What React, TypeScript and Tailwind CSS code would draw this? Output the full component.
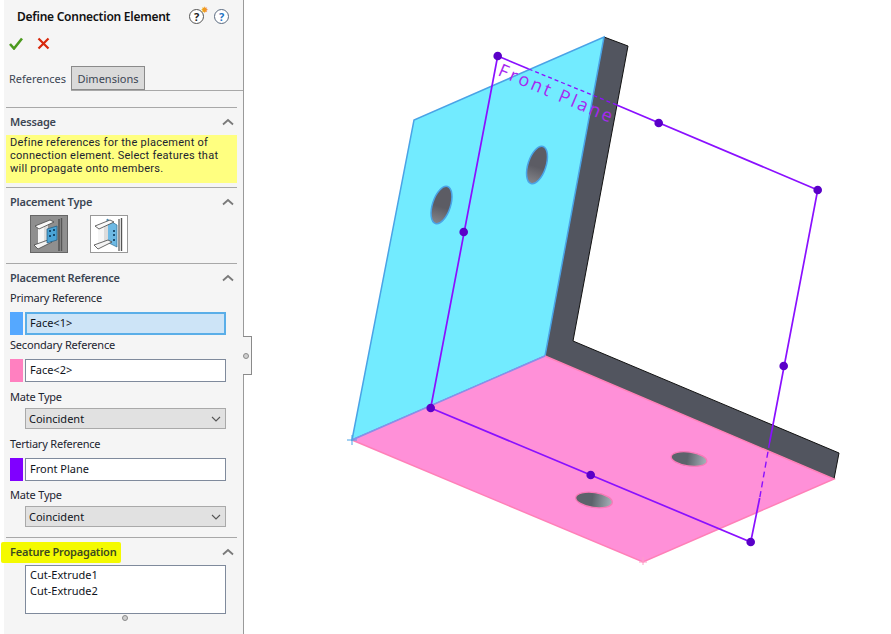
const font = "font-['Noto_Sans',sans-serif]";

const Chevron = () => (
  <svg width="12" height="8" viewBox="0 0 12 8" className="shrink-0">
    <path d="M1 6.5 L6 2 L11 6.5" fill="none" stroke="#7a7a7a" strokeWidth="1.8" />
  </svg>
);

const Section = ({ title, className = "", children }: { title: string; className?: string; children?: React.ReactNode }) => (
  <section className={`mx-[6px] border-t border-[#a8a8a8] ${className}`}>
    <div className="flex h-[26px] items-center justify-between pl-[4px] pr-[3px] pt-[2px]">
      <span className="text-[11px] font-semibold tracking-[-0.2px] text-[#3c4654]">{title}</span>
      <Chevron />
    </div>
    {children}
  </section>
);

const FieldLabel = ({ className = "", children }: { className?: string; children: React.ReactNode }) => (
  <div className={`flex h-[16px] items-center pl-[4px] text-[11px] tracking-[-0.2px] text-[#1c2430] ${className}`}>{children}</div>
);

const RefRow = ({ color, value, active, className = "" }: { color: string; value: string; active?: boolean; className?: string }) => (
  <div className={`flex h-[23px] gap-[2px] pl-[4px] ${className}`}>
    <div className={`w-[13px] ${color}`} />
    <div
      className={
        active
          ? "flex w-[201px] items-center border-2 border-[#5aaee8] bg-[#cde4f7] pl-[3px] text-[11px] text-[#10141c]"
          : "flex w-[201px] items-center border border-[#7f8a9c] bg-white pl-[4px] text-[11px] text-[#10141c]"
      }
    >
      {value}
    </div>
  </div>
);

const Select = ({ value, className = "" }: { value: string; className?: string }) => (
  <div className={`ml-[19px] flex h-[21px] w-[201px] items-center justify-between border border-[#a9a9a9] bg-[#e1e1e1] pl-[3px] pr-[4px] pt-[1px] text-[11px] text-[#10141c] ${className}`}>
    <span>{value}</span>
    <svg width="10" height="6" viewBox="0 0 10 6">
      <path d="M1 1 L5 5 L9 1" fill="none" stroke="#555" strokeWidth="1.1" />
    </svg>
  </div>
);

const BeamIcon = ({ outer }: { outer?: boolean }) => (
  <svg width="36" height="36" viewBox="1 1 36 36">
    <path d="M29 4 V36" stroke="#333" strokeWidth="1" />
    <path d="M31.5 3 V36" stroke="#555" strokeWidth="1.4" />
    {outer && <path d="M17 4 L27 10 V32 L17 27 Z" fill="#6db9e4" stroke="#2f6d92" strokeWidth="0.7" />}
    <path d="M8 13 L18 9 V26 L8 30 Z" fill="#f6f6f6" />
    <path d="M14 11 L18 9 V26 L14 28 Z" fill="#dcdcdc" />
    <path d="M5 11 L20 5 L24 7 L9 14 Z" fill="#fafafa" stroke="#444" strokeWidth="0.8" />
    <path d="M4 30 L18 25 L22 27 L8 34 Z" fill="#f4f4f4" stroke="#444" strokeWidth="0.8" />
    {outer ? (
      <g fill="#1d4f73">
        <rect x="23" y="15" width="2" height="2" />
        <rect x="23" y="19" width="2" height="2" />
        <rect x="23" y="24" width="2" height="2" />
      </g>
    ) : (
      <>
        <path d="M17 14 L27 11 V25 L17 28 Z" fill="#4aa3d6" stroke="#1e5a80" strokeWidth="0.7" />
        <g fill="#174a6e">
          <rect x="19" y="15" width="2" height="2" />
          <rect x="23" y="14" width="2" height="2" />
          <rect x="19" y="20" width="2" height="2" />
          <rect x="23" y="19" width="2" height="2" />
        </g>
      </>
    )}
  </svg>
);

const HelpIcon = ({ dark }: { dark?: boolean }) => (
  <div
    className={
      dark
        ? "flex h-[15px] w-[15px] items-center justify-center rounded-full border-[1.5px] border-[#555] bg-white text-[11px] font-bold leading-none text-[#222]"
        : "flex h-[15px] w-[15px] items-center justify-center rounded-full border-[1.5px] border-[#5a6a80] bg-white text-[11px] font-bold leading-none text-[#1f73c4]"
    }
  >
    ?
  </div>
);

const P = "#8a10ff";
const handles = [
  [497, 56],
  [658, 123],
  [817, 190],
  [783, 366],
  [750, 542],
  [590, 475],
  [430, 408],
  [463, 232],
];

const Model = () => (
  <svg width="647" height="634" viewBox="244 0 647 634" className="block">
    <defs>
      <linearGradient id="holeBlue" x1="0" y1="0" x2="0" y2="1">
        <stop offset="0.55" stopColor="#5c5c64" />
        <stop offset="1" stopColor="#85858a" />
      </linearGradient>
      <linearGradient id="holePink" x1="0" y1="0" x2="1" y2="0">
        <stop offset="0.45" stopColor="#5c636b" />
        <stop offset="1" stopColor="#a8b2ba" />
      </linearGradient>
    </defs>
    <path d="M604 37 L628 46 L573 341 L839 453 L834 479 L545 356 Z" fill="#52555f" />
    <path d="M604 37 L628 46 L573 341 L839 453 L834 479" fill="none" stroke="#111" strokeWidth="1" />
    <path d="M352 440 L414 120 L604 37 L545 356 Z" fill="#72ebff" stroke="#4aa3e6" strokeWidth="1.5" />
    <path d="M352 440 L545 356 L834 479 L643 562 Z" fill="#ff90d8" />
    <path d="M352 440 L643 562 L834 479 L545 356" fill="none" stroke="#ff80b8" strokeWidth="1.5" />
    <path d="M352 440 L545 356" stroke="#8c8ee8" strokeWidth="1.5" />
    <path d="M347 440 H357 M352 435 V445" stroke="#4aa3e6" strokeWidth="1" />
    <path d="M643 557 V565 M639 562 H647" stroke="#ff9cc8" strokeWidth="1" />

    {/* holes */}
    <ellipse cx="441.5" cy="205" rx="9" ry="19.5" transform="rotate(18 441.5 205)" fill="url(#holeBlue)" stroke="#4aa3e6" strokeWidth="1.5" />
    <ellipse cx="537" cy="165" rx="9" ry="19.5" transform="rotate(18 537 165)" fill="url(#holeBlue)" stroke="#4aa3e6" strokeWidth="1.5" />
    <ellipse cx="689" cy="459" rx="18" ry="7" transform="rotate(8 689 459)" fill="url(#holePink)" stroke="#f87ab8" strokeWidth="1.3" />
    <ellipse cx="594" cy="500" rx="18.5" ry="7.5" transform="rotate(8 594 500)" fill="url(#holePink)" stroke="#f87ab8" strokeWidth="1.3" />

    {/* front plane */}
    <g transform="translate(0.7 0)">
      <g fill="none" stroke={P} strokeWidth="1.7">
        <path d="M497 56 L528 69" />
        <path d="M528 69 L616 105" strokeDasharray="4 3" strokeWidth="1.3" />
        <path d="M616 105 L817 190 L769 442" />
        <path d="M769 442 L759 498" strokeDasharray="6 4" strokeWidth="1.4" />
        <path d="M759 498 L750 542 L430 408 L497 56" />
      </g>
      {handles.map(([x, y]) => (
        <circle key={`${x}-${y}`} cx={x} cy={y} r="4.3" fill="#5a00c8" />
      ))}
    </g>
    <text
      x="497"
      y="75"
      transform="rotate(23 497 75)"
      fill="#a828f0"
      fontSize="18"
      fontWeight="500"
      letterSpacing="2.6"
      fontFamily="'Open Sans', sans-serif"
    >
      Front Plane
    </text>
  </svg>
);

export default function App() {
  return (
    <div className={`flex h-[634px] w-[891px] overflow-hidden bg-white ${font}`}>
      <aside className="relative h-full w-[244px] shrink-0 border-r border-[#9a9a9a] bg-[linear-gradient(90deg,#fff_4px,#f5f5f5_4px)]">
        <div className="flex h-[33px] items-center justify-between pl-[17px] pr-[14px]">
          <span className="text-[12px] font-semibold tracking-[-0.25px] text-[#111]">Define Connection Element</span>
          <div className="relative flex gap-[10px]">
            <div className="relative">
              <HelpIcon dark />
              <span className="absolute -right-[5px] -top-[4px] text-[9px] leading-none text-[#f09a20]">✸</span>
            </div>
            <HelpIcon />
          </div>
        </div>
        <div className="flex h-[21px] items-center gap-[14px] pl-[9px]">
          <svg width="14" height="13" viewBox="0 0 14 13">
            <path d="M1 7 L5 11.5 L13 1.5" fill="none" stroke="#4c9a1e" strokeWidth="2.6" />
          </svg>
          <svg width="13" height="13" viewBox="0 0 13 13">
            <path d="M1.5 1.5 L11.5 11.5 M11.5 1.5 L1.5 11.5" fill="none" stroke="#d8280c" strokeWidth="2.2" />
          </svg>
        </div>
        <div className="mt-[12px] flex h-[25px] pl-[4px]">
          <div className="flex h-[24px] w-[67px] items-center justify-center pt-[2px] text-[11px] text-[#3c4654]">References</div>
          <div className="flex h-[25px] flex-1 items-start border-b border-[#a8a8a8] pr-[3px]">
            <div className="flex h-[24px] w-[74px] items-center justify-center border border-[#8a8a8a] bg-[#dadada] pt-[2px] text-[11px] text-[#3c4654]">Dimensions</div>
          </div>
        </div>

        <Section title="Message" className="mt-[16px]">
          <div className="mt-[1px] h-[48px] bg-[#ffff80] pl-[4px] pt-[1px] font-['Roboto',sans-serif] text-[11px] leading-[13px] tracking-[0.27px] text-[#1c2430]">
            <div>Define references for the placement of</div>
            <div>connection element. Select features that</div>
            <div>will propagate onto members.</div>
          </div>
        </Section>

        <Section title="Placement Type" className="mt-[4px]">
          <div className="flex h-[49px] gap-[22px] pl-[24px] pt-[1px]">
            <div className="flex h-[38px] w-[38px] items-center justify-center border border-[#666] bg-[#8f8f8f]">
              <BeamIcon />
            </div>
            <div className="flex h-[38px] w-[38px] items-center justify-center border border-[#999] bg-white">
              <BeamIcon outer />
            </div>
          </div>
        </Section>

        <Section title="Placement Reference">
          <FieldLabel>Primary Reference</FieldLabel>
          <RefRow color="bg-[#55a8ff]" value="Face<1>" active className="mt-[6px]" />
          <FieldLabel className="mt-[2px]">Secondary Reference</FieldLabel>
          <RefRow color="bg-[#ff80c0]" value="Face<2>" className="mt-[6px]" />
          <FieldLabel className="mt-[7px]">Mate Type</FieldLabel>
          <Select value="Coincident" className="mt-[3px]" />
          <FieldLabel className="mt-[7px]">Tertiary Reference</FieldLabel>
          <RefRow color="bg-[#8000ff]" value="Front Plane" className="mt-[6px]" />
          <FieldLabel className="mt-[6px]">Mate Type</FieldLabel>
          <Select value="Coincident" className="mt-[3px]" />
        </Section>

        <section className="mx-[6px] mt-[10px] border-t border-[#a8a8a8]">
          <div className="flex h-[26px] items-center justify-between pl-[4px] pr-[3px] pt-[2px]">
            <span className="-ml-[9px] flex h-[21px] items-center rounded-[2px] bg-[#f4fa00] pl-[9px] pr-[5px] text-[11px] font-semibold tracking-[-0.2px] text-[#3c4a20]">Feature Propagation</span>
            <Chevron />
          </div>
          <div className="ml-[19px] mt-[1px] flex h-[49px] w-[201px] flex-col border border-[#7f8a9c] bg-white pl-[4px] pt-[1px] text-[11px] leading-[16px] text-[#10141c]">
            <div>Cut-Extrude1</div>
            <div>Cut-Extrude2</div>
          </div>
          <div className="ml-[116px] mt-[1px] h-[6px] w-[6px] rounded-full border border-[#8a8a8a] bg-[#cfcfcf]" />
        </section>

        {/* collapse handle on the panel edge */}
        <div className="absolute left-[243px] top-[336px] flex h-[39px] w-[9px] items-center justify-center border border-l-0 border-[#8a8a8a] bg-[#f5f5f5]">
          <div className="-ml-[3px] h-[6px] w-[6px] rounded-full border border-[#8a8a8a] bg-[#cfcfcf]" />
        </div>
      </aside>
      <main className="min-w-0 flex-1">
        <Model />
      </main>
    </div>
  );
}
